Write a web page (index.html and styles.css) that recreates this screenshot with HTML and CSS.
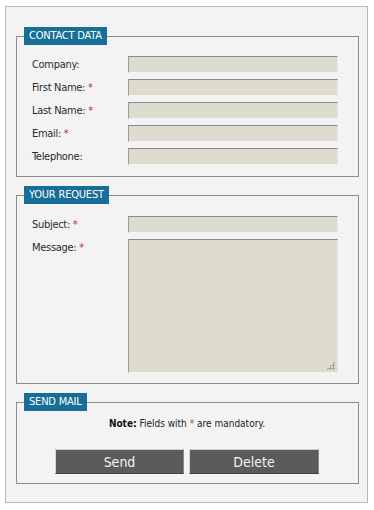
FILE: index.html
```html
<!DOCTYPE html>
<html lang="en">
<head>
<meta charset="utf-8">
<title>Contact</title>
<link rel="stylesheet" href="styles.css">
</head>
<body>
<form class="page">
  <fieldset class="box box-contact">
    <legend class="box-title">Contact Data</legend>
    <div class="rows">
      <label class="row"><span class="lbl">Company:</span><input class="field" type="text"></label>
      <label class="row"><span class="lbl">First Name: <span class="req">*</span></span><input class="field" type="text"></label>
      <label class="row"><span class="lbl">Last Name: <span class="req">*</span></span><input class="field" type="text"></label>
      <label class="row"><span class="lbl">Email: <span class="req">*</span></span><input class="field" type="text"></label>
      <label class="row"><span class="lbl">Telephone:</span><input class="field" type="text"></label>
    </div>
  </fieldset>
  <fieldset class="box box-request">
    <legend class="box-title">Your Request</legend>
    <div class="rows">
      <label class="row"><span class="lbl">Subject: <span class="req">*</span></span><input class="field" type="text"></label>
      <label class="row row-top"><span class="lbl">Message: <span class="req">*</span></span><span class="area-wrap"><textarea class="field area"></textarea><span class="grip"></span></span></label>
    </div>
  </fieldset>
  <fieldset class="box box-send">
    <legend class="box-title">Send Mail</legend>
    <p class="note"><b>Note:</b> Fields with <span class="req">*</span> are mandatory.</p>
    <div class="actions">
      <button class="btn btn-send" type="button">Send</button>
      <button class="btn btn-delete" type="button">Delete</button>
    </div>
  </fieldset>
</form>
</body>
</html>
```
FILE: styles.css
```css
html, body {
  margin: 0;
  padding: 0;
  background: #ffffff;
}
body {
  font-family: "DejaVu Sans Condensed", "DejaVu Sans", sans-serif;
  font-stretch: condensed;
  font-size: 11px;
  color: #2a2a2a;
}
.page {
  box-sizing: border-box;
  width: 363px;
  margin: 6px 0 0 5px;
  border: 1px solid #b8b8b8;
  background: #f3f3f3;
  padding: 20px 8px 18px 10px;
}
.box {
  margin: 0;
  border: 1px solid #8c8c8c;
  padding: 11px 8px 11px 7px;
  min-inline-size: 0;
}
.box + .box {
  margin-top: 9px;
}
.box-request {
  padding-top: 12px;
  padding-bottom: 10px;
}
.box-send {
  padding-top: 5px;
  padding-bottom: 9px;
}
.box-title {
  padding: 0 5px;
  height: 18px;
  line-height: 18px;
  background: #176e97;
  color: #ffffff;
  text-transform: uppercase;
  font-size: 11px;
  letter-spacing: -0.2px;
}
.rows {
  display: flex;
  flex-direction: column;
  gap: 6px;
  padding-left: 8px;
}
.row {
  display: flex;
  align-items: center;
}
.row-top {
  align-items: flex-start;
}
.lbl {
  width: 96px;
  flex: none;
  line-height: 17px;
  color: #2a2a2a;
  letter-spacing: -0.3px;
}
.req {
  color: #c0302a;
}
.field {
  box-sizing: border-box;
  width: 210px;
  height: 17px;
  margin: 0;
  padding: 0 3px;
  background: #dddccf;
  border: 1px solid;
  border-color: #8a8a8a #e6e6e0 #f2f2ee #9c9c9c;
  font: inherit;
  outline: none;
}
.area-wrap {
  position: relative;
  display: block;
  width: 210px;
  height: 134px;
}
.area {
  display: block;
  height: 134px;
  resize: none;
}
.grip {
  position: absolute;
  right: 3px;
  bottom: 3px;
  width: 9px;
  height: 9px;
  background-image: radial-gradient(circle at 1.5px 1.5px, #a3a396 1px, transparent 1.1px);
  background-size: 3px 3px;
  clip-path: polygon(100% 0, 100% 100%, 0 100%);
}
.note {
  margin: 0;
  text-align: center;
  line-height: 16px;
  font-size: 10px;
  color: #222;
}
.note b {
  font-weight: bold;
  color: #111;
}
.actions {
  display: flex;
  justify-content: center;
  gap: 5px;
  margin-top: 17px;
}
.btn {
  box-sizing: border-box;
  height: 25px;
  margin: 0;
  padding: 0;
  background: #5b5b5b;
  color: #f4f4f4;
  border: 1px solid;
  border-color: #cfcfcf #8a8a8a #3e3e3e #d4d4d4;
  font-family: "DejaVu Sans Condensed", "DejaVu Sans", sans-serif;
  font-stretch: condensed;
  font-size: 14px;
  cursor: pointer;
}
.btn-send {
  width: 129px;
}
.btn-delete {
  width: 130px;
}
```
